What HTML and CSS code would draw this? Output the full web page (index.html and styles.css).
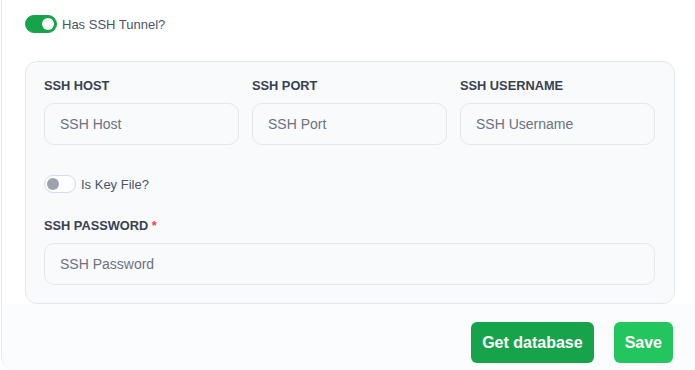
FILE: index.html
```html
<!DOCTYPE html>
<html>
	<head>
		<meta charset="utf-8" />
		<title>SSH Tunnel</title>
		<link rel="stylesheet" href="styles.css">
	</head>
	<body>
		<div class="panel">
			<div class="content">
				<label class="switchRow">
					<input type="checkbox" checked>
					<span class="switch"></span>
					<span class="switchText">Has SSH Tunnel?</span>
				</label>
				<div class="sshBox">
					<div class="fieldGrid">
						<div class="field">
							<label class="fieldLabel">SSH HOST</label>
							<input class="textInput" type="text" placeholder="SSH Host">
						</div>
						<div class="field">
							<label class="fieldLabel">SSH PORT</label>
							<input class="textInput" type="text" placeholder="SSH Port">
						</div>
						<div class="field">
							<label class="fieldLabel">SSH USERNAME</label>
							<input class="textInput" type="text" placeholder="SSH Username">
						</div>
					</div>
					<label class="switchRow small">
						<input type="checkbox">
						<span class="switch"></span>
						<span class="switchText">Is Key File?</span>
					</label>
					<div class="field password">
						<label class="fieldLabel">SSH PASSWORD <span class="req">*</span></label>
						<input class="textInput" type="password" placeholder="SSH Password">
					</div>
				</div>
			</div>
			<div class="footer">
				<button class="btn btnDark">Get database</button>
				<button class="btn btnLight">Save</button>
			</div>
		</div>
	</body>
</html>
```
FILE: styles.css
```css
html,body{margin:0;padding:0;}
body{
	background:#fff;
	font-family:"Liberation Sans", Arial, sans-serif;
	width:695px;
	height:370px;
	overflow:hidden;
}
.panel{
	box-sizing:border-box;
	height:370px;
	margin-left:1px;
	border-left:1px solid #e5e7eb;
	border-bottom-left-radius:14px;
	display:flex;
	flex-direction:column;
	background:#fff;
	overflow:hidden;
}
.content{
	padding:15px 18px 0 23px;
}

/* switches */
.switchRow{
	display:flex;
	align-items:center;
	height:18px;
	cursor:pointer;
}
.switchRow input{
	display:none;
}
.switch{
	position:relative;
	box-sizing:border-box;
	width:32px;
	height:18px;
	border-radius:9px;
	background:#fff;
	border:1px solid #d5dde8;
	flex:none;
}
.switch:after{
	content:'';
	position:absolute;
	top:2px;
	left:2px;
	width:12px;
	height:12px;
	border-radius:50%;
	background:#9ca3af;
}
.switchRow input:checked + .switch{
	background:#16a34a;
	border-color:#16a34a;
}
.switchRow input:checked + .switch:after{
	left:16px;
	background:#fff;
}
.switchText{
	margin-left:5px;
	font-size:13px;
	color:#475569;
}

/* ssh box */
.sshBox{
	margin-top:28px;
	box-sizing:border-box;
	width:650px;
	padding:16px 19px 18px 18px;
	background:#f8fafc;
	border:1px solid #e2e8f0;
	border-radius:12px;
}
.fieldGrid{
	display:grid;
	grid-template-columns:repeat(3, minmax(0, 1fr));
	column-gap:13px;
}
.field{
	display:flex;
	flex-direction:column;
	min-width:0;
}
.fieldLabel{
	font-size:12.8px;
	line-height:16px;
	font-weight:bold;
	color:#374151;
	margin-bottom:9px;
}
.req{
	color:#ef4444;
}
.textInput{
	box-sizing:border-box;
	width:100%;
	min-width:0;
	height:42px;
	padding:0 15px;
	border:1px solid #e5e7eb;
	border-radius:10px;
	background:#f9fafb;
	font-family:"Liberation Sans", Arial, sans-serif;
	font-size:14px;
	color:#111827;
	outline:none;
}
.textInput::placeholder{
	color:#6b7280;
}
.switchRow.small{
	margin-top:30px;
}
.field.password{
	margin-top:25px;
}

/* footer */
.footer{
	flex:1;
	margin-top:2px;
	display:flex;
	justify-content:flex-end;
	align-items:flex-start;
	gap:20px;
	padding:16px 22px 0 0;
	background:#fbfcfd;
	box-shadow:0 -1px 4px rgba(15,23,42,0.025);
}
.btn{
	height:41px;
	padding:0 11px;
	border:none;
	border-radius:6px;
	color:#fff;
	font-family:"Liberation Sans", Arial, sans-serif;
	font-size:16px;
	font-weight:bold;
	cursor:pointer;
}
.btnDark{
	background:#16a34a;
}
.btnLight{
	background:#22c55e;
}
```
